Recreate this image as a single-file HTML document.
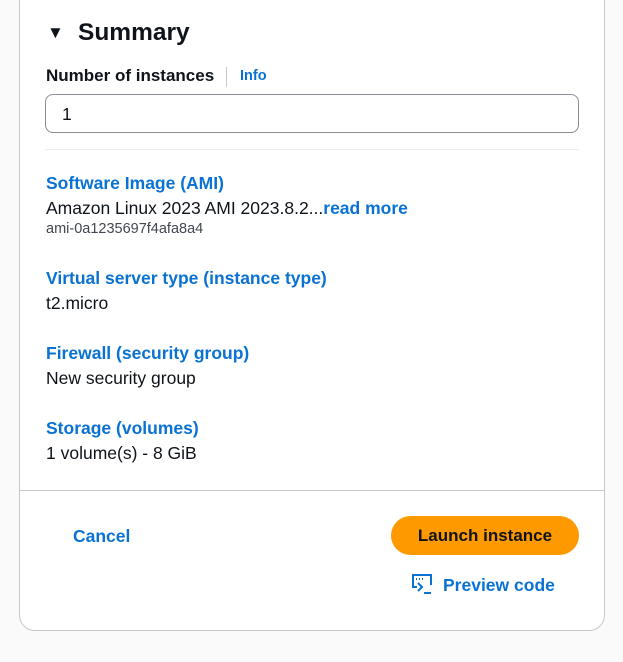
<!DOCTYPE html><html><head><style>
body{margin:0;background:#fafafa;font-family:"Liberation Sans",sans-serif;color:#0f141a;width:623px;height:662px;position:relative;overflow:hidden}
.card{position:absolute;left:19px;top:-16px;width:584px;height:645px;background:#fff;border:1px solid #c6c6cd;border-radius:16px}
.a{position:absolute;white-space:nowrap}
.h{color:#0972d3;font-weight:bold;font-size:17.5px}
.v{font-size:17.5px}
</style></head><body>
<div class="card"></div>
<div class="a" style="left:47px;top:23px;font-size:17px">▼</div>
<div class="a" style="left:78px;top:19px;font-size:24.5px;font-weight:bold">Summary</div>
<div class="a" style="left:46px;top:66px;font-size:17px;font-weight:bold">Number of instances</div>
<div class="a" style="left:226px;top:67px;width:1px;height:20px;background:#c6c6cd"></div>
<div class="a" style="left:240px;top:68px;font-size:14.5px;font-weight:bold;color:#0972d3">Info</div>
<div class="a" style="left:45px;top:94px;width:532px;height:37px;border:1px solid #8c8c94;border-radius:8px"></div>
<div class="a v" style="left:62px;top:104px">1</div>
<div class="a" style="left:45px;top:149px;width:534px;height:1px;background:#ebebf0"></div>
<div class="a h" style="left:46px;top:173px">Software Image (AMI)</div>
<div class="a v" style="left:46px;top:198px">Amazon Linux 2023 AMI 2023.8.2...<span class="h">read more</span></div>
<div class="a" style="left:46px;top:221px;font-size:14.5px;color:#424650">ami-0a1235697f4afa8a4</div>
<div class="a h" style="left:46px;top:268px">Virtual server type (instance type)</div>
<div class="a v" style="left:46px;top:293px">t2.micro</div>
<div class="a h" style="left:46px;top:343px">Firewall (security group)</div>
<div class="a v" style="left:46px;top:368px">New security group</div>
<div class="a h" style="left:46px;top:418px">Storage (volumes)</div>
<div class="a v" style="left:46px;top:443px">1 volume(s) - 8 GiB</div>
<div class="a" style="left:20px;top:490px;width:584px;height:1px;background:#c6c6cd"></div>
<div class="a h" style="left:73px;top:526px">Cancel</div>
<div class="a" style="left:391px;top:516px;width:188px;height:39px;background:#ff9900;border-radius:20px;text-align:center;line-height:39px;font-weight:bold;font-size:17px">Launch instance</div>
<svg class="a" style="left:411px;top:573px" width="22" height="22" viewBox="0 0 22 22" fill="none" stroke="#0972d3" stroke-width="2"><path d="M6 14H2V2h18v10"/><path d="M5 6h1M8 6h1M11 6h1" /><path d="M7 10l4 4-4 4" /><path d="M13 20h7"/></svg>
<div class="a h" style="left:443px;top:575px">Preview code</div>
</body></html>
